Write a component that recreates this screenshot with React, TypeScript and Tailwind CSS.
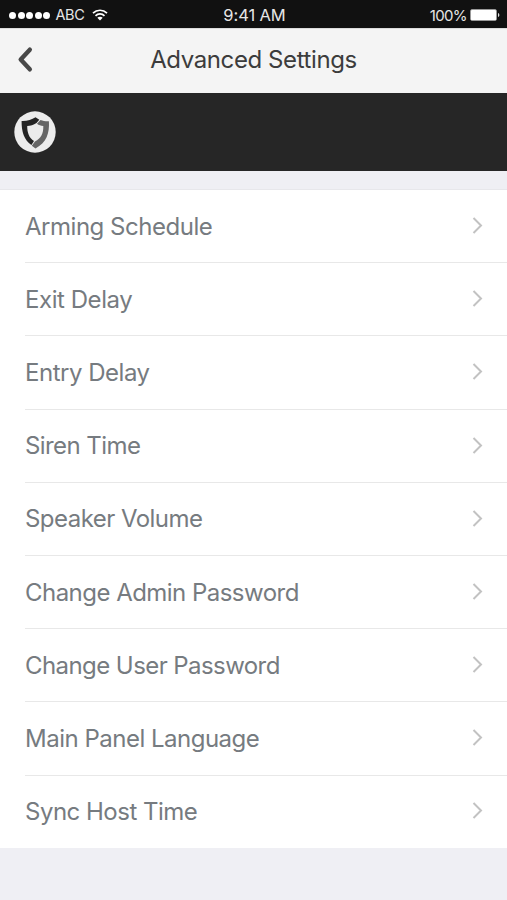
type Setting = {
  label: string;
  className: string;
};

const settings: Setting[] = [
  { label: "Arming Schedule", className: "tracking-[-0.48px]" },
  { label: "Exit Delay", className: "tracking-[-0.44px]" },
  { label: "Entry Delay", className: "tracking-[-0.48px]" },
  { label: "Siren Time", className: "tracking-[-0.58px]" },
  { label: "Speaker Volume", className: "tracking-[-0.54px]" },
  { label: "Change Admin Password", className: "tracking-[-0.53px]" },
  { label: "Change User Password", className: "tracking-[-0.57px]" },
  { label: "Main Panel Language", className: "tracking-[-0.5px]" },
  { label: "Sync Host Time", className: "tracking-[-0.5px]" },
];

const WifiIcon = () => (
  <svg width="16" height="12" viewBox="0 0 16 12" fill="none">
    <path d="M1 4.1C4.9 0.3 11.1 0.3 15 4.1" stroke="#fff" strokeWidth="1.7" />
    <path d="M3.5 6.8C6 4.3 10 4.3 12.5 6.8" stroke="#fff" strokeWidth="1.7" />
    <path d="M5.3 8.8C6.8 7.3 9.2 7.3 10.7 8.8L8 11.5Z" fill="#fff" />
  </svg>
);

const BatteryIcon = () => (
  <svg width="30" height="12" viewBox="0 0 30 12" fill="none">
    <rect x="0.5" y="0.5" width="26" height="11" rx="1.5" stroke="#999" />
    <rect x="1" y="1" width="25" height="10" rx="0.5" fill="#fff" />
    <path d="M28 4C29.8 4.4 29.8 7.6 28 8Z" fill="#ddd" />
  </svg>
);

const ShieldLogo = () => (
  <svg width="42" height="42" viewBox="0 0 42 42" fill="none">
    <circle cx="21" cy="21" r="20.7" fill="#ececec" />
    <path
      d="M21.5 6.3L25.3 8.7L22.5 12C19.5 14 16.5 15 13.2 15C13.2 21.5 15 27 20 30L17.4 33.9C10.2 29 7.4 20.5 7.6 9.9C13 10.1 17.5 9 21.5 6.3Z"
      fill="#242424"
    />
    <path
      d="M26.5 9C29 10.1 31.8 10.4 34.9 10.3C35.7 22 32.5 32 21.5 37.4L17.8 34.8L21 30.4C27 27.5 29.5 22.5 29.3 15C26.8 14.8 24.8 14 23 12.7Z"
      fill="#656565"
    />
  </svg>
);

const StatusBar = () => (
  <div className="grid h-[28px] grid-cols-3 items-center bg-[#111] pt-[2px] pr-[7px] pl-[9px] leading-none text-[#e6e6e6]">
    <div className="flex items-center">
      <div className="flex gap-[1.6px]">
        {[0, 1, 2, 3, 4].map((dot) => (
          <span key={dot} className="size-[7px] rounded-full bg-white" />
        ))}
      </div>
      <span className="ml-[5px] text-[14.5px] tracking-[-0.3px]">ABC</span>
      <span className="ml-[7px]">
        <WifiIcon />
      </span>
    </div>
    <span className="text-center text-[16.5px] tracking-[-0.1px]">9:41 AM</span>
    <div className="flex items-center justify-end gap-[3px]">
      <span className="text-[15px] tracking-[-0.6px]">100%</span>
      <BatteryIcon />
    </div>
  </div>
);

const Header = () => (
  <header className="grid h-[65px] grid-cols-[60px_1fr_60px] items-center border-t border-[#dcdcdc] bg-[#f4f4f4] pb-[3px]">
    <button aria-label="Back" className="pl-[17px]">
      <svg width="17" height="27" viewBox="0 0 17 27" fill="none">
        <path
          d="M12.8 3.7L3.7 13.5L12.8 23.3"
          stroke="#484848"
          strokeWidth="4.4"
          strokeLinecap="round"
          strokeLinejoin="round"
        />
      </svg>
    </button>
    <h1 className="text-center text-[24px] tracking-[-0.4px] text-[#3c3c3c]">
      Advanced Settings
    </h1>
  </header>
);

const App = () => {
  return (
    <div className="min-h-screen bg-[#efeff4] font-['Inter',sans-serif]">
      <StatusBar />
      <Header />
      <div className="flex h-[77.5px] items-center bg-[#262626] pl-[14px]">
        <ShieldLogo />
      </div>
      <ul className="mt-[18.5px] border-t border-[#e7e7eb] bg-white">
        {settings.map(({ label, className }) => (
          <li
            key={label}
            className="ml-[25px] flex h-[73.2px] items-center justify-between border-b border-[#e8e8e8] pr-[24px] last:h-[72.8px] last:border-transparent"
          >
            <span className={`pt-px text-[24px] text-[#767b80] ${className}`}>
              {label}
            </span>
            <svg
              width="11"
              height="17"
              viewBox="0 0 11 17"
              fill="none"
              className="mb-px"
            >
              <path d="M1.5 1L9 8.5L1.5 16" stroke="#c2c2c2" strokeWidth="2" />
            </svg>
          </li>
        ))}
      </ul>
    </div>
  );
};

export default App;
